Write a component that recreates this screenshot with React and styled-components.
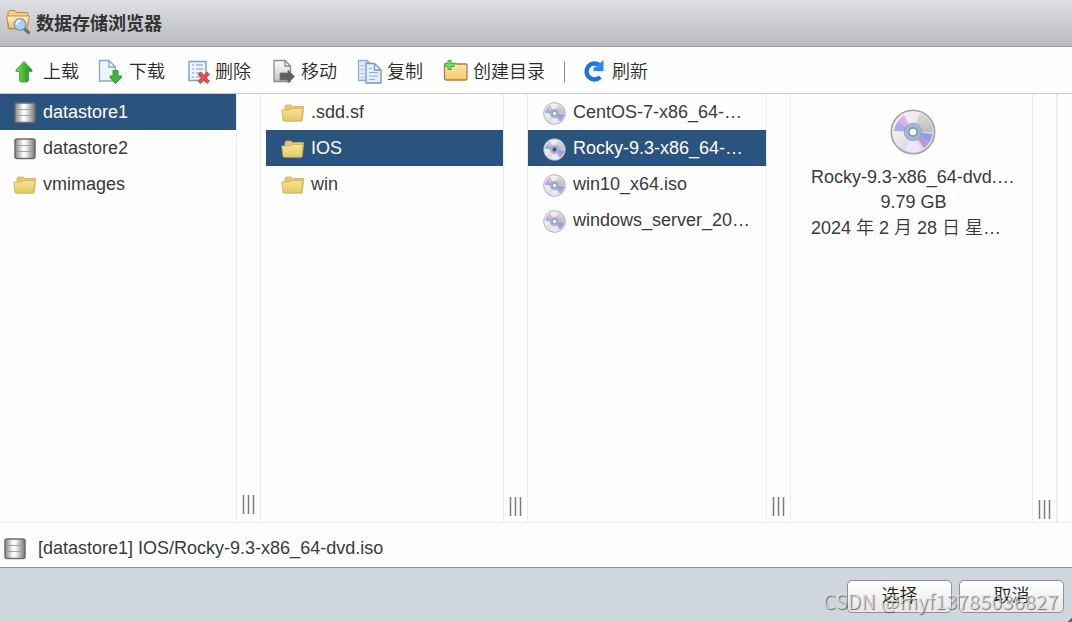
import React from "react";
import styled, { createGlobalStyle } from "styled-components";

const Global = createGlobalStyle`
  * { box-sizing: border-box; }
  body { margin: 0; overflow: hidden; background: #fff; }
  svg { display: block; flex: none; }
`;

const Dialog = styled.div`
  position: relative;
  display: flex;
  flex-direction: column;
  width: 1072px;
  height: 622px;
  background: #fefefe;
  color: #3a3a3a;
  font: 18px/24px "Liberation Sans", "Noto Sans CJK SC", sans-serif;
`;
const TitleBar = styled.header`
  display: flex;
  align-items: center;
  height: 47px;
  padding: 0 5px 2px;
  gap: 5px;
  background: linear-gradient(#dfe0e3, #b9babd);
  border-bottom: 1px solid #9c9c9f;
`;
const Title = styled.h1`
  margin: 0;
  padding-top: 3px;
  font-size: 18px;
  font-weight: 700;
  color: #333;
`;
const Toolbar = styled.nav`
  display: flex;
  align-items: center;
  height: 47px;
  padding-left: 12px;
  border-bottom: 1px solid #c8c8c8;
`;
const Tool = styled.button`
  display: flex;
  align-items: center;
  width: ${(p) => p.$width}px;
  height: 46px;
  padding: 4px 0 0;
  border: 0;
  gap: ${(p) => p.$gap ?? 5}px;
  background: none;
  color: #292929;
  font: inherit;
  font-weight: 350;
  white-space: nowrap;
  svg { margin-top: ${(p) => p.$iconTop ?? 0}px; }
`;
const Divider = styled.span`
  width: 1px;
  height: 22px;
  margin: 3px 17px 0 0;
  background: #8c8c8c;
`;
const Browser = styled.main`
  display: flex;
  height: 429px;
  border-bottom: 1px solid #ececec;
`;
const Column = styled.section`
  width: ${(p) => p.$width}px;
  padding-left: ${(p) => p.$inset ?? 0}px;
`;
const Row = styled.div`
  display: flex;
  align-items: center;
  height: 36px;
  padding: 0 15px 0 ${(p) => p.$pad}px;
  gap: ${(p) => p.$gap}px;
  background: ${(p) => (p.$selected ? "#2a547f" : "transparent")};
  color: ${(p) => (p.$selected ? "#fff" : "inherit")};
  svg { margin-top: 2px; }
`;
const Label = styled.span`
  overflow: hidden;
  white-space: nowrap;
  text-overflow: ellipsis;
`;
const Splitter = styled.div`
  display: flex;
  align-items: flex-end;
  justify-content: center;
  width: ${(p) => p.$width ?? 25}px;
  padding-bottom: ${(p) => p.$bottom}px;
  border: solid #ececec;
  border-width: 0 ${(p) => p.$edge ?? 1}px 0 1px;
`;
const Details = styled.section`
  display: flex;
  flex-direction: column;
  align-items: center;
  width: 241px;
  padding: 15px 16px 0 20px;
  line-height: 25px;
  svg { margin-right: 2px; }
`;
const DetailLine = styled.div`
  width: 100%;
  overflow: hidden;
  white-space: nowrap;
  text-overflow: ellipsis;
  text-align: ${(p) => p.$align ?? "left"};
  font-weight: 350;
`;
const DetailName = styled(DetailLine)`
  margin: 10px 0 0;
  letter-spacing: -0.02px;
`;
const DetailDate = styled(DetailLine)`
  margin-top: 1px;
`;
const PathBar = styled.div`
  display: flex;
  align-items: center;
  height: 45px;
  padding-left: 4px;
  gap: 12px;
  border-bottom: 1px solid #929292;
  svg { margin-top: 7px; }
  span { margin-top: 5px; }
`;
const Footer = styled.footer`
  display: flex;
  justify-content: flex-end;
  height: 54px;
  padding: 12px 8px 0 0;
  gap: 7px;
  background: #d0d6de;
`;
const Button = styled.button`
  width: 105px;
  height: 33px;
  padding: 0 0 1px;
  border: 1px solid #909090;
  border-radius: 5px;
  background: linear-gradient(#fff, #e8e8e8);
  color: #222;
  font: inherit;
  font-weight: 350;
`;
const Watermark = styled.div`
  position: absolute;
  left: 823px;
  top: 589px;
  color: rgba(235, 235, 235, .7);
  font-family: "Noto Sans CJK SC", sans-serif;
  font-size: 19.8px;
  font-weight: 350;
  letter-spacing: .35px;
  white-space: nowrap;
  text-shadow: 1px 1px 1px rgba(70, 70, 70, .75);
`;
const Corner = styled.div`
  position: absolute;
  right: 0;
  bottom: 0;
  width: 5px;
  height: 5px;
  background: linear-gradient(135deg, transparent 50%, #666 50%);
`;

const SearchFolder = () => (
  <svg width="26" height="26" viewBox="0 0 26 26">
    <defs><linearGradient id="sf" x2="0" y2="1"><stop stopColor="#fff0c6" /><stop offset="1" stopColor="#efbf66" /></linearGradient></defs>
    <path d="M3 19V3.500L4.500 1.500H10l1.500 2H22l1 1.500V8l-2 12H4z" fill="#f5ce7d" stroke="#b98643" />
    <path d="M1.500 7H23q1.500 0 1.200 1.500L22 19.500H6q-2 0-2.200-2z" fill="url(#sf)" stroke="#c08b43" />
    <path d="m19.500 20 4 3.500" stroke="#67727f" strokeWidth="3.400" strokeLinecap="round" />
    <circle cx="15" cy="15.500" r="5.800" fill="#a8d3f0" stroke="#8497ab" strokeWidth="1.400" />
    <path d="M11.500 15.500q0-4 4-4" fill="none" stroke="#eefaff" strokeWidth="1.800" />
  </svg>
);
const Upload = () => (
  <svg width="25" height="26" viewBox="0 0 25 26">
    <defs><linearGradient id="up"><stop stopColor="#7fdb54" /><stop offset="1" stopColor="#168d17" /></linearGradient></defs>
    <path d="m12 2.500 8 8.500v1.500h-3.500v9.500L15 23H9l-1.500-1v-9.500H4V11z" fill="url(#up)" stroke="#48ad47" />
  </svg>
);
const Download = () => (
  <svg width="26" height="26" viewBox="0 0 26 26">
    <path d="M1.500 1.500H11l6.500 6.500v14h-16z M11 1.500V8h6.500" fill="#edf5fc" stroke="#8aa8c8" strokeWidth="1.400" />
    <path d="M15 11.500h5V17h3.500v1.500L17.500 24.500 12 18.500V17h3z" fill="#43b536" stroke="#349a34" />
  </svg>
);
const Delete = () => (
  <svg width="24" height="26" viewBox="0 0 24 26">
    <path d="M2 2.500h17v19H2z" fill="#edf4fb" stroke="#7f9fc4" strokeWidth="1.400" />
    <path d="M5 6h2m2 0h7M5 10h2m2 0h7M5 14h2m2 0h7M5 18h2m2 0h4" stroke="#a2b6ce" strokeWidth="1.300" />
    <path d="m12 14 9.500 9.500m0-9.500L12 23.500" stroke="#c94343" strokeWidth="3.900" />
    <path d="m12.500 14.500 8.500 8.500m0-8.500-8.500 8.500" stroke="#e34e4e" strokeWidth="2.400" />
  </svg>
);
const Move = () => (
  <svg width="26" height="26" viewBox="0 0 26 26">
    <defs><linearGradient id="mv" x2="0" y2="1"><stop stopColor="#fff" /><stop offset="1" stopColor="#c4c4c4" /></linearGradient></defs>
    <path d="M2 1.500H13l5.500 5.500v15.500H2z M13 1.500V7h5.500" fill="url(#mv)" stroke="#8c8c8c" strokeWidth="1.300" />
    <path d="M8 14h8v-3l6.500 6.500-6.500 6.500v-3H8z" fill="#606060" stroke="#777" strokeWidth=".8" />
  </svg>
);
const Copy = () => (
  <svg width="26" height="26" viewBox="0 0 26 26">
    <path d="M1.500 1.500H10L15 6v15.500H1.500z M10 1.500V6h5" fill="#dce9f6" stroke="#93afcf" strokeWidth="1.300" />
    <path d="M3.500 6.500h4m-4 4h4m-4 4h4m-4 4h4" stroke="#b3c8de" />
    <path d="M9 4.500h8.500L24 11v13H9z M17.500 4.500V11H24" fill="#e5eff9" stroke="#7898bd" strokeWidth="1.300" />
    <path d="M12 9.500h3m-3 4h9m-9 3.500h9m-9 3.500h6" stroke="#94afcc" />
  </svg>
);
const NewFolder = () => (
  <svg width="26" height="26" viewBox="0 0 26 26">
    <defs><linearGradient id="nf" x2="0" y2="1"><stop stopColor="#ffe9ac" /><stop offset="1" stopColor="#f6c66d" /></linearGradient></defs>
    <path d="M1.500 6q0-1.500 1.500-1.500h9L14.500 5H23q1 0 1 1v13.500q0 1.500-1.500 1.500H3q-1.500 0-1.500-1.500z" fill="url(#nf)" stroke="#aa7e3d" strokeWidth="1.300" />
    <path d="M6.500 1v10m-5-5h10" stroke="#42ad42" strokeWidth="4" /><path d="M6.500 2v8m-4-4h8" stroke="#78dd67" strokeWidth="2" />
  </svg>
);
const Refresh = () => (
  <svg width="24" height="26" viewBox="0 0 24 26">
    <path d="M17.500 7.200A8 8 0 1 0 18.300 19" fill="none" stroke="#1976dd" strokeWidth="4.400" />
    <path d="M21.500 2v11H11.500V9.500l3.500-1L18 5z" fill="#258cf2" />
  </svg>
);
const Store = () => (
  <svg width="22" height="22" viewBox="0 0 22 22">
    <defs><linearGradient id="st"><stop stopColor="#858585" /><stop offset=".42" stopColor="#fff" /><stop offset=".55" stopColor="#f1f1f1" /><stop offset="1" stopColor="#727272" /></linearGradient></defs>
    <rect x="1" y="1" width="20" height="19.500" rx="2" fill="url(#st)" stroke="#6b6b6b" strokeWidth="1.500" />
    <path d="M2 7.500h18M2 13.500h18" stroke="#999" strokeWidth=".9" />
  </svg>
);
const Folder = () => (
  <svg width="24" height="18" viewBox="0 0 24 18">
    <defs><linearGradient id="fd" x2="0" y2="1"><stop stopColor="#f7e594" /><stop offset="1" stopColor="#e3ca68" /></linearGradient></defs>
    <path d="M4 6V2l1.500-1H10l1.500 1.500H22.500v3L21 17H4z" fill="#eec474" stroke="#d6ad59" strokeWidth=".8" />
    <path d="M.8 6H9l2-1.500h10.500L20.500 17H2.200z" fill="url(#fd)" stroke="#d2b35d" strokeWidth=".9" />
  </svg>
);
const Disc = ({ size = 23, hole = "#fff" }) => (
  <svg width={size} height={size} viewBox="0 0 46 46">
    <defs>
      <linearGradient id="dc" x2="1" y2="1"><stop stopColor="#f4f4f6" /><stop offset=".35" stopColor="#eeeef2" /><stop offset=".65" stopColor="#d6d6db" /><stop offset="1" stopColor="#eeecff" /></linearGradient>
      <linearGradient id="gl" x2="0" y2="1"><stop stopColor="#dedee0" /><stop offset="1" stopColor="#bdbdc0" /></linearGradient>
    </defs>
    <circle cx="23" cy="23" r="21.700" fill="url(#dc)" stroke="#a3a3a8" strokeWidth="1.600" />
    <path d="M23 23 30 4A20 20 0 0 1 42.500 23z" fill="url(#gl)" />
    <path d="M23 23 15 41A20 20 0 0 0 31 42z" fill="#e9e8fb" />
    <path d="M23 23 4 22A20 20 0 0 1 8 12z" fill="#a7aeea" />
    <path d="M23 23 8 12A20 20 0 0 1 14 6z" fill="#e2b1e3" />
    <path d="M23 23 42.500 25A20 20 0 0 1 39 34z" fill="#929fe5" />
    <path d="M23 23 39 34A20 20 0 0 1 34 39z" fill="#bf94d5" />
    <circle cx="23" cy="23" r="8.700" fill="#a5b5d2" stroke="#91a2c2" /><circle cx="23" cy="23" r="5.300" fill="#7c91b7" stroke="#a3b5d1" /><circle cx="23" cy="23" r="3.300" fill={hole} />
  </svg>
);
const Grip = () => (
  <svg width="13" height="19" viewBox="0 0 13 19"><path d="M1.500 0v19m5-19v19m5-19v19" stroke="#7d7d7d" strokeWidth="1.500" /></svg>
);

const tools = [
  ["上载", Upload, 86, 6], ["下载", Download, 89, 5], ["删除", Delete, 85, 4],
  ["移动", Move, 85, 3], ["复制", Copy, 86, 4], ["创建目录", NewFolder, 121, 4],
];
const files = ["CentOS-7-x86_64-DVD.iso", "Rocky-9.3-x86_64-dvd.iso", "win10_x64.iso", "windows_server_2019.iso"];

export default function App() {
  return (
    <Dialog>
      <Global />
      <TitleBar><SearchFolder /><Title>数据存储浏览器</Title></TitleBar>
      <Toolbar>
        {tools.map(([text, Icon, width, gap]) => <Tool key={text} $width={width} $gap={gap}><Icon />{text}</Tool>)}
        <Divider />
        <Tool $width={70} $gap={6} $iconTop={-3}><Refresh />刷新</Tool>
      </Toolbar>
      <Browser>
        <Column $width={236}>
          <Row $pad={14} $gap={7} $selected><Store /><Label>datastore1</Label></Row>
          <Row $pad={14} $gap={7}><Store /><Label>datastore2</Label></Row>
          <Row $pad={13} $gap={6}><Folder /><Label>vmimages</Label></Row>
        </Column>
        <Splitter $bottom={8}><Grip /></Splitter>
        <Column $width={242} $inset={5}>
          {[".sdd.sf", "IOS", "win"].map((name) => <Row key={name} $pad={15} $gap={6} $selected={name === "IOS"}><Folder /><Label>{name}</Label></Row>)}
        </Column>
        <Splitter $bottom={6}><Grip /></Splitter>
        <Column $width={238}>
          {files.map((name, i) => <Row key={name} $pad={15} $gap={7} $selected={i === 1}><Disc hole={i === 1 ? "#2a547f" : "#fff"} /><Label>{name}</Label></Row>)}
        </Column>
        <Splitter $bottom={6}><Grip /></Splitter>
        <Details>
          <Disc size={46} />
          <DetailName>Rocky-9.3-x86_64-dvd.iso</DetailName>
          <DetailLine $align="center">9.79 GB</DetailLine>
          <DetailDate>2024 年 2 月 28 日 星期三</DetailDate>
        </Details>
        <Splitter $bottom={3} $edge={2} $width={26}><Grip /></Splitter>
      </Browser>
      <PathBar><Store /><span>[datastore1] IOS/Rocky-9.3-x86_64-dvd.iso</span></PathBar>
      <Footer><Button>选择</Button><Button>取消</Button></Footer>
      <Watermark>CSDN @myf13785036827</Watermark>
      <Corner />
    </Dialog>
  );
}
